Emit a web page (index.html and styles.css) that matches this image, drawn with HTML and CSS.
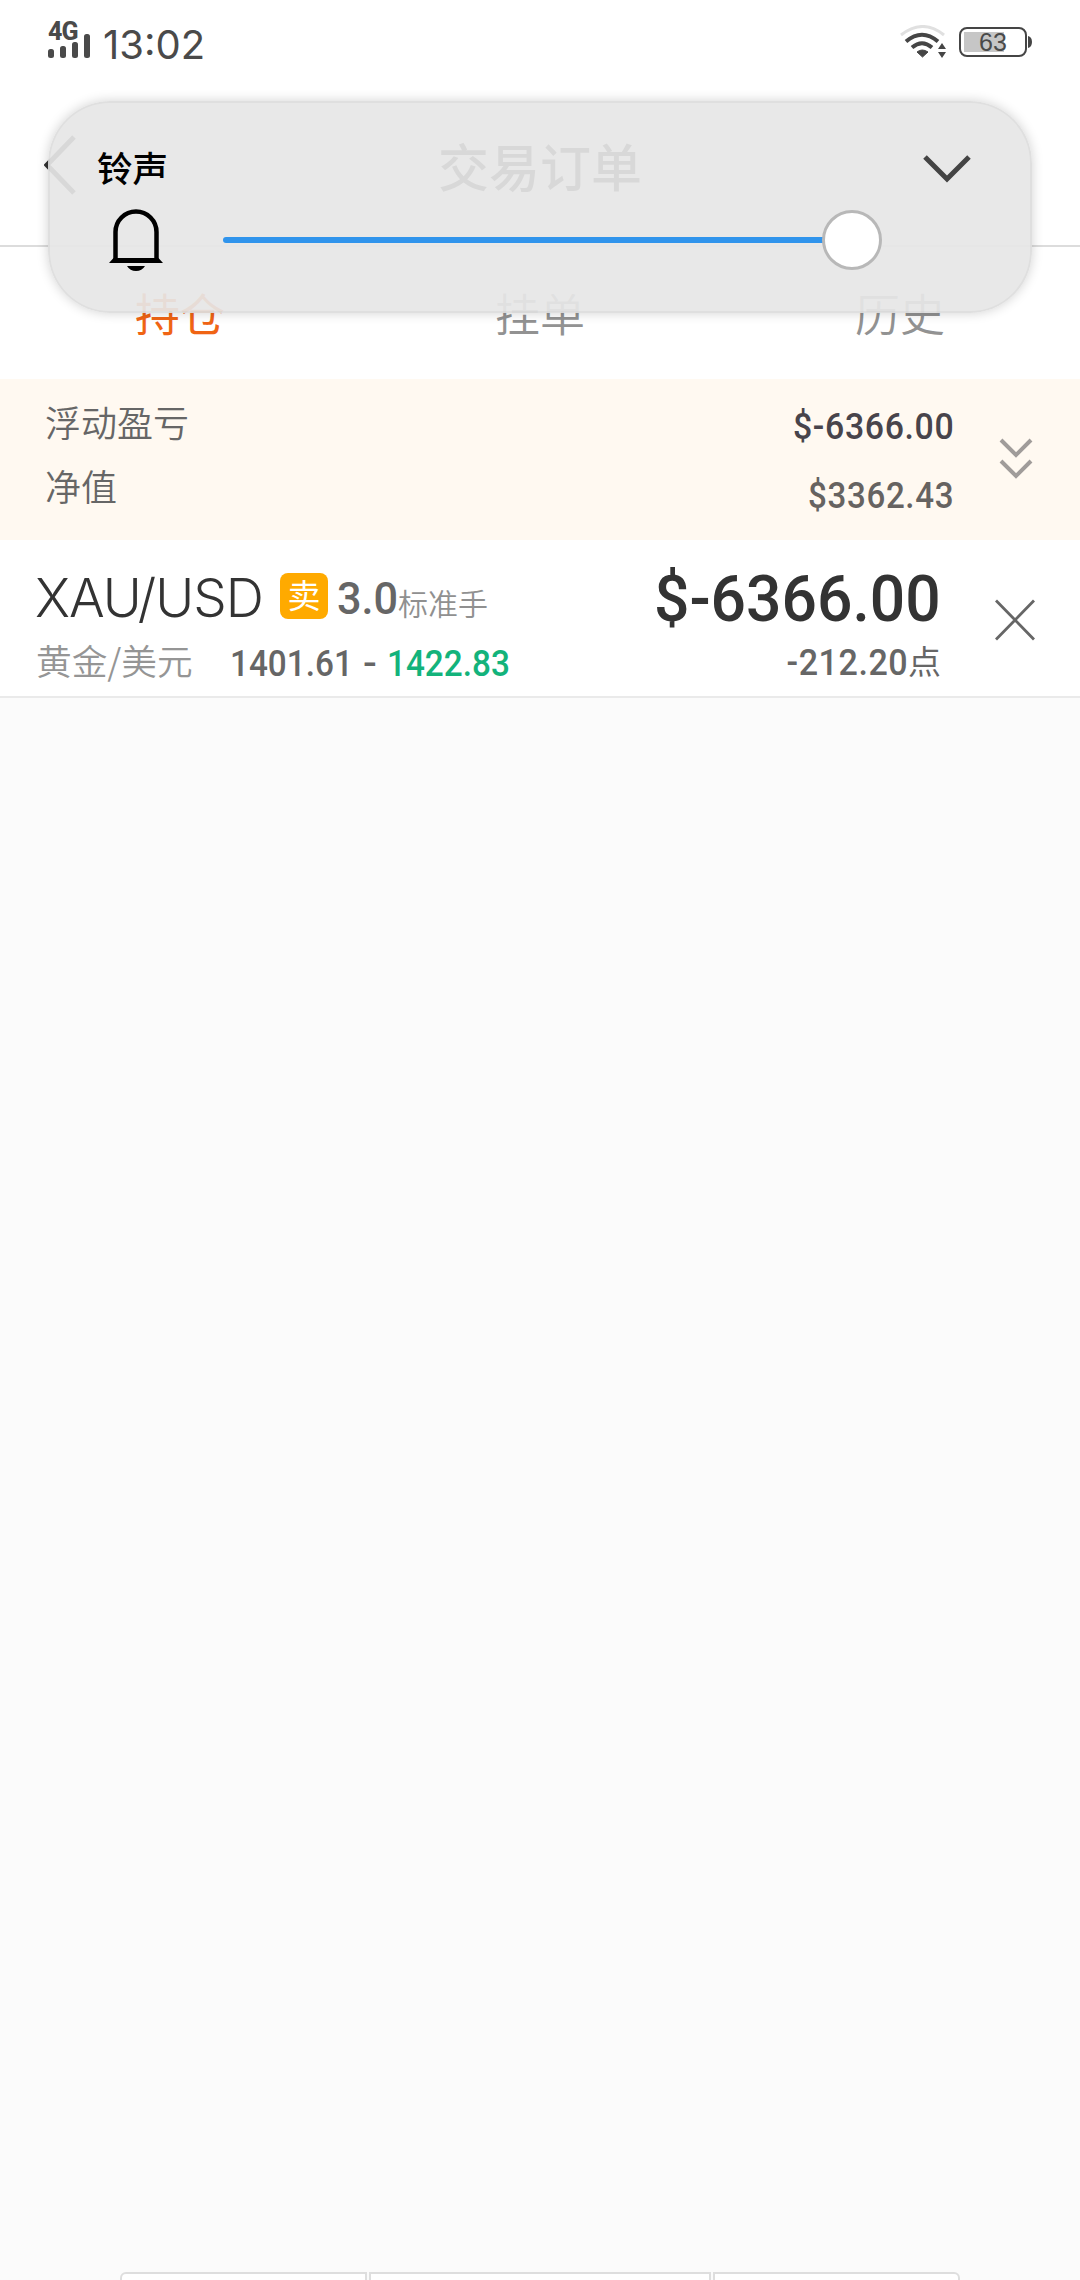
FILE: index.html
```html
<!DOCTYPE html>
<html lang="zh-CN">
<head>
<meta charset="utf-8">
<title>交易订单</title>
<link rel="stylesheet" href="styles.css">
</head>
<body>
<div class="screen">
  <div class="status">
    <div class="signal">
      <span class="net">4G</span>
      <svg width="42" height="26" viewBox="0 0 42 26" fill="#4a4a4a"><rect y="16" width="6" height="9" rx="2.5"/><rect x="12" y="13" width="6" height="12" rx="2.5"/><rect x="24" y="9" width="6" height="16" rx="2.5"/><rect x="36" y="1" width="6" height="24" rx="2.5"/></svg>
    </div>
    <span class="clock">13:02</span>
    <svg class="wifi" width="46" height="34" viewBox="0 0 46 34" fill="none"><path d="M1 10Q23 -7 44 10" stroke="#e0e0e0" stroke-width="3"/><path d="M6 16.500Q22 3 38 16.500M12 22.500Q22 14 32 22.500" stroke="#454545" stroke-width="4"/><path d="M17 27Q22 23 28 27L22.500 32Z" fill="#454545" stroke="#454545" stroke-linejoin="round"/><path d="M38 24L42 18L46 24ZM38 27H46L42 33Z" fill="#454545"/></svg>
    <div class="battery"><span>63</span></div>
    <svg class="cap" width="4" height="12" viewBox="0 0 4 12"><path d="M0 0Q4 1 4 6T0 12Z" fill="#454545"/></svg>
  </div>
  <div class="header">
    <svg class="back" width="36" height="60" viewBox="0 0 36 60" fill="none" stroke="#333" stroke-width="5"><path d="M30 2L3 30L30 58"/></svg>
    <h1>交易订单</h1>
  </div>
  <div class="tabs"><span class="tab active">持仓</span><span class="tab">挂单</span><span class="tab">历史</span></div>
  <div class="summary">
    <div class="labels"><span>浮动盈亏</span><span>净值</span></div>
    <div class="values"><span class="num profit">$-6366.00</span><span class="num equity">$3362.43</span></div>
    <svg class="expand" width="34" height="44" viewBox="0 0 34 44" fill="none" stroke="#a09c9a" stroke-width="4"><path d="M2 3L17 18L32 3M2 24L17 39L32 24"/></svg>
  </div>
  <div class="order">
    <div class="info">
      <div class="line first"><span class="symbol">XAU/USD</span><span class="side">卖</span><span class="num lots">3.0</span><span class="unit">标准手</span></div>
      <div class="line second"><span class="name">黄金/美元</span><span class="num open">1401.61</span><span class="num dash">-</span><span class="num current">1422.83</span></div>
    </div>
    <div class="result">
      <div class="num amount">$-6366.00</div>
      <div class="points"><span class="num">-212.20</span><span class="dian">点</span></div>
    </div>
    <svg class="close" width="40" height="42" viewBox="0 0 40 42" fill="none" stroke="#666" stroke-width="2.800"><path d="M1 1.500L39 40.500M39 1.500L1 40.500"/></svg>
  </div>
  <div class="bottom"><i></i><i></i><i></i></div>

  <div class="volume">
    <div class="volume-top"><span>铃声</span><svg width="48" height="28" viewBox="0 0 48 28" fill="none" stroke="#444" stroke-width="5"><path d="M2 2L24 24L46 2"/></svg></div>
    <div class="volume-row">
      <svg width="54" height="62" viewBox="0 0 54 62"><path d="M6.500 51V23a20 20 0 0 1 41 0V51" fill="none" stroke="#000" stroke-width="4.500"/><path d="M4.500 49H49.500L54 54H0ZM18 57H36Q33 62 27 62T18 57Z"/></svg>
      <div class="track"></div><div class="knob"></div>
    </div>
  </div>
</div>
</body>
</html>
```
FILE: styles.css
```css
* { box-sizing: border-box; }
body { margin: 0; background: #fbfbfb; font-family: Roboto, "Noto Sans CJK SC", sans-serif; }
svg { display: block; flex: none; }
.screen { position: relative; width: 1080px; height: 2280px; overflow: hidden; display: flex; flex-direction: column; }
.status { height: 88px; background: #fff; display: flex; align-items: flex-start; padding: 0 48px; color: #4a4a4a; }
.signal { width: 55px; padding-top: 22px; }
.net { display: block; height: 11px; font: 800 25px/20px Roboto, sans-serif; letter-spacing: -.8px; }
.clock { flex: 1; padding-top: 20px; font: 400 40px/50px Inter, sans-serif; }
.wifi { margin-top: 25px; }
.battery { width: 68px; height: 30px; margin: 27px 1px 0 13px; border: 2px solid #454545; border-radius: 8px; display: flex; background: linear-gradient(#c6c6c6, #c6c6c6) 3px 3px / 40px 20px no-repeat; }
.battery span { width: 100%; text-align: center; font: 25px/27px "Liberation Sans", sans-serif; }
.cap { margin-top: 36px; }
.header { height: 159px; background: #fff; border-bottom: 2px solid #dcdcdc; display: flex; align-items: center; padding: 0 44px; }
.back { margin-bottom: 4px; }
.header h1 { flex: 1; margin: 0 36px 4px 0; text-align: center; font: 500 51px/60px "Noto Sans CJK SC", sans-serif; color: #333; }
.tabs { height: 132px; background: #fff; display: flex; }
.tab { flex: 1; text-align: center; color: #929292; font: 350 45px/60px "Noto Sans CJK SC", sans-serif; padding-top: 36px; }
.tab.active { color: #f06414; font-weight: 400; }
.summary { height: 161px; background: #fff9f1; display: flex; align-items: flex-start; padding: 0 47px 0 45px; }
.labels { display: flex; flex-direction: column; gap: 15px; margin-top: 18px; font: 350 36px/49px "Noto Sans CJK SC", sans-serif; color: #666; }
.values { flex: 1; display: flex; flex-direction: column; gap: 19px; align-items: flex-end; margin: 23px 45px 0 0; line-height: 50px; }
.num { display: block; font-family: Roboto, sans-serif; font-weight: 500; white-space: nowrap; }
.values .num { font-size: 37px; transform: scaleX(.915); transform-origin: right; letter-spacing: .7px; }
.values .profit { color: #48444b; }
.values .equity { color: #666361; transform: scaleX(.895); }
.expand { margin-top: 58px; }
.order { height: 158px; background: #fff; border-bottom: 2px solid #eaeaea; display: flex; padding: 0 45px 0 36px; }
.info { width: 500px; }
.line { display: flex; align-items: center; }
.first { height: 60px; margin-top: 27px; }
.symbol { width: 244px; white-space: nowrap; font: 300 53px/60px Inter, sans-serif; letter-spacing: -1px; text-indent: -1px; padding-top: 1px; color: #333; }
.side { width: 48px; height: 46px; margin-bottom: 2px; border-radius: 8px; background: #ffaa00; color: #fff; text-align: center; font: 400 33px/43px "Noto Sans CJK SC", sans-serif; }
.lots { width: 60px; margin: 3px 0 0 9px; font-size: 45px; line-height: 56px; color: #666; transform: scaleX(.96); transform-origin: left; }
.unit { margin: 9px 0 0 1px; font: 350 30px/40px "Noto Sans CJK SC", sans-serif; color: #909090; }
.second { height: 54px; margin-top: 9px; color: #666; }
.second .num { font-size: 37px; transform: scaleX(.9); transform-origin: left; }
.name { width: 194px; margin-bottom: 7px; font: 350 35.7px/50px "Noto Sans CJK SC", sans-serif; color: #959595; }
.open { width: 133px; }
.second .dash { width: 24px; transform: scaleX(1.1); }
.second .current { color: #13b37b; }
.result { flex: 1; display: flex; flex-direction: column; align-items: flex-end; padding-right: 54px; }
.amount { margin-top: 25px; font-size: 65px; line-height: 68px; color: #333; transform: scaleX(.96); transform-origin: right; }
.points { display: flex; align-items: center; margin-top: 4px; height: 50px; color: #666; }
.points .num { font-size: 37px; transform: scaleX(.92); transform-origin: right; letter-spacing: .6px; }
.dian { margin-bottom: 5px; font: 400 33px/50px "Noto Sans CJK SC", sans-serif; }
.close { margin-top: 59px; }
.bottom { margin: auto 120px 0; height: 8px; display: grid; grid-template-columns: 247px 342px 247px; gap: 2px; overflow: hidden; }
.bottom i { height: 20px; border: 2px solid #dedede; background: #fff; }
.bottom i:first-child { border-top-left-radius: 6px; }
.bottom i:last-child { border-top-right-radius: 6px; }
.volume { position: absolute; left: 48px; top: 101px; width: 984px; height: 212px; border-radius: 62px; background: rgba(230, 230, 230, .925); box-shadow: 0 0 12px rgba(0, 0, 0, .18), inset 0 0 0 2px rgba(0, 0, 0, .035); padding: 42px 0 0 49px; }
.volume-top { display: flex; justify-content: space-between; align-items: center; height: 50px; padding-right: 61px; font: 500 35.5px/50px "Noto Sans CJK SC", sans-serif; color: #000; }
.volume-top span { margin-bottom: 2px; }
.volume-top svg { margin-top: 2px; }
.volume-row { display: flex; align-items: center; height: 62px; margin-top: 16px; padding-left: 12px; }
.track { width: 604px; height: 6px; margin-left: 60px; border-radius: 3px 0 0 3px; background: #3094ec; }
.knob { width: 60px; height: 60px; margin-left: -5px; border: 3px solid #b8b8b8; border-radius: 50%; background: #fff; }
```
